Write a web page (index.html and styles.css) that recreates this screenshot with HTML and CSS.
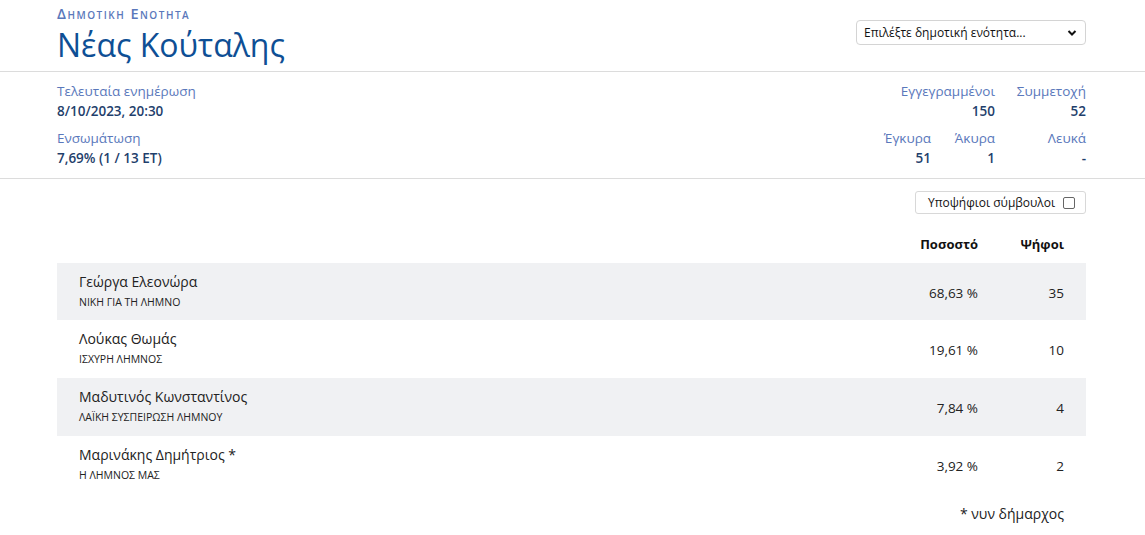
FILE: index.html
```html
<!DOCTYPE html>
<html lang="el">
<head>
<meta charset="utf-8">
<link rel="stylesheet" href="styles.css">
</head>
<body>
<header class="top">
  <div class="wrap top-inner">
    <div class="title-block">
      <div class="kicker">Δημοτικη Ενοτητα</div>
      <h1 class="title">Νέας Κούταλης</h1>
    </div>
    <div class="select-box">
      <span>Επιλέξτε δημοτική ενότητα...</span>
      <svg class="chev" width="10" height="8" viewBox="0 0 10 8"><path d="M1.5 2 L5 5.5 L8.5 2" fill="none" stroke="#111" stroke-width="2"/></svg>
    </div>
  </div>
</header>
<section class="info">
  <div class="wrap info-inner">
    <div class="info-left">
      <div class="stat">
        <div class="lbl">Τελευταία ενημέρωση</div>
        <div class="val">8/10/2023, 20:30</div>
      </div>
      <div class="stat">
        <div class="lbl">Ενσωμάτωση</div>
        <div class="val">7,69% (1 / 13 ΕΤ)</div>
      </div>
    </div>
    <div class="info-right">
      <div class="stat span2">
        <div class="lbl">Εγγεγραμμένοι</div>
        <div class="val">150</div>
      </div>
      <div class="stat">
        <div class="lbl">Συμμετοχή</div>
        <div class="val">52</div>
      </div>
      <div class="stat">
        <div class="lbl">Έγκυρα</div>
        <div class="val">51</div>
      </div>
      <div class="stat">
        <div class="lbl">Άκυρα</div>
        <div class="val">1</div>
      </div>
      <div class="stat">
        <div class="lbl">Λευκά</div>
        <div class="val">-</div>
      </div>
    </div>
  </div>
</section>
<main class="wrap results">
  <div class="toggle-row">
    <label class="toggle">Υποψήφιοι σύμβουλοι <span class="box"></span></label>
  </div>
  <div class="thead">
    <div class="c-name"></div>
    <div class="c-pct">Ποσοστό</div>
    <div class="c-votes">Ψήφοι</div>
  </div>
  <div class="row alt first">
    <div class="c-name"><div class="name">Γεώργα Ελεονώρα</div><div class="party">ΝΙΚΗ ΓΙΑ ΤΗ ΛΗΜΝΟ</div></div>
    <div class="c-pct">68,63 %</div>
    <div class="c-votes">35</div>
  </div>
  <div class="row">
    <div class="c-name"><div class="name">Λούκας Θωμάς</div><div class="party">ΙΣΧΥΡΗ ΛΗΜΝΟΣ</div></div>
    <div class="c-pct">19,61 %</div>
    <div class="c-votes">10</div>
  </div>
  <div class="row alt">
    <div class="c-name"><div class="name">Μαδυτινός Κωνσταντίνος</div><div class="party">ΛΑΪΚΗ ΣΥΣΠΕΙΡΩΣΗ ΛΗΜΝΟΥ</div></div>
    <div class="c-pct">7,84 %</div>
    <div class="c-votes">4</div>
  </div>
  <div class="row">
    <div class="c-name"><div class="name">Μαρινάκης Δημήτριος *</div><div class="party">Η ΛΗΜΝΟΣ ΜΑΣ</div></div>
    <div class="c-pct">3,92 %</div>
    <div class="c-votes">2</div>
  </div>
  <div class="note">* νυν δήμαρχος</div>
</main>
</body>
</html>
```

FILE: styles.css
```css
* { box-sizing: border-box; }
html, body { margin: 0; padding: 0; background: #fff; }
body {
  font-family: "Open Sans", "Noto Sans", sans-serif;
  color: #222;
  font-size: 13px;
  padding-right: 2px;
}
.wrap {
  width: 1029px;
  margin: 0 auto;
}
.top { border-bottom: 1px solid #dcdcdc; margin-right: -2px; }
.top-inner {
  display: flex;
  justify-content: space-between;
  align-items: flex-start;
  height: 71px;
  position: static;
}
.kicker {
  font-variant: small-caps;
  color: #5a78bb;
  font-size: 14.5px;
  font-weight: 600;
  letter-spacing: 1.5px;
  line-height: 16px;
  margin-top: 6px;
}
.title {
  margin: 3px 0 0;
  font-size: 32px;
  font-weight: 500;
  color: #0e4f95;
  line-height: 40px;
}
.select-box {
  margin-top: 20px;
  width: 230px;
  height: 25px;
  border: 1px solid #d4d4d4;
  border-radius: 4px;
  display: flex;
  align-items: center;
  justify-content: space-between;
  padding: 0 8px 0 7px;
  font-size: 12px;
  color: #111;
}
.chev { display: block; }
.info { border-bottom: 1px solid #dcdcdc; margin-right: -2px; padding-right: 2px; }
.top { padding-right: 2px; }
.info-inner {
  display: flex;
  justify-content: space-between;
  height: 106px;
  padding: 9px 0 0;
}
.info-left { display: flex; flex-direction: column; gap: 7px; }
.stat .lbl {
  color: #5a78bb;
  font-size: 13.5px;
  line-height: 20px;
}
.stat .val {
  color: #1f3f6c;
  font-size: 13.5px;
  font-weight: 600;
  line-height: 20px;
}
.info-right {
  display: grid;
  grid-template-columns: auto 64px 91px;
  row-gap: 7px;
  text-align: right;
  align-self: flex-start;
}
.info-right .span2 { grid-column: 1 / span 2; }
.results { padding-top: 12px; }
.toggle-row { display: flex; justify-content: flex-end; }
.toggle {
  display: flex;
  align-items: center;
  height: 23px;
  width: 171px;
  border: 1px solid #d8d8d8;
  border-radius: 3px;
  padding: 0 10px 0 12px;
  justify-content: space-between;
  font-size: 12px;
  color: #111;
}
.toggle .box {
  width: 12px;
  height: 12px;
  border: 1px solid #666;
  border-radius: 2px;
}
.thead, .row {
  display: grid;
  grid-template-columns: 1fr 140px 86px;
  padding-right: 22px;
}
.thead {
  font-weight: 700;
  color: #111;
  font-size: 13px;
  height: 49px;
  align-items: end;
  padding-bottom: 10px;
}
.c-pct, .c-votes { text-align: right; }
.row {
  height: 58px;
  align-items: center;
  padding-left: 22px;
  color: #222;
  font-size: 13.5px;
}
.row.first { height: 57px; }
.row .c-pct, .row .c-votes { padding-top: 2px; }
.row.alt { background: #f0f1f3; }
.name { font-size: 14px; line-height: 20px; }
.party { font-size: 10.5px; line-height: 20px; text-transform: uppercase; }
.note {
  text-align: right;
  padding-right: 22px;
  margin-top: 10px;
  font-size: 14px;
  line-height: 20px;
  color: #222;
}
```
